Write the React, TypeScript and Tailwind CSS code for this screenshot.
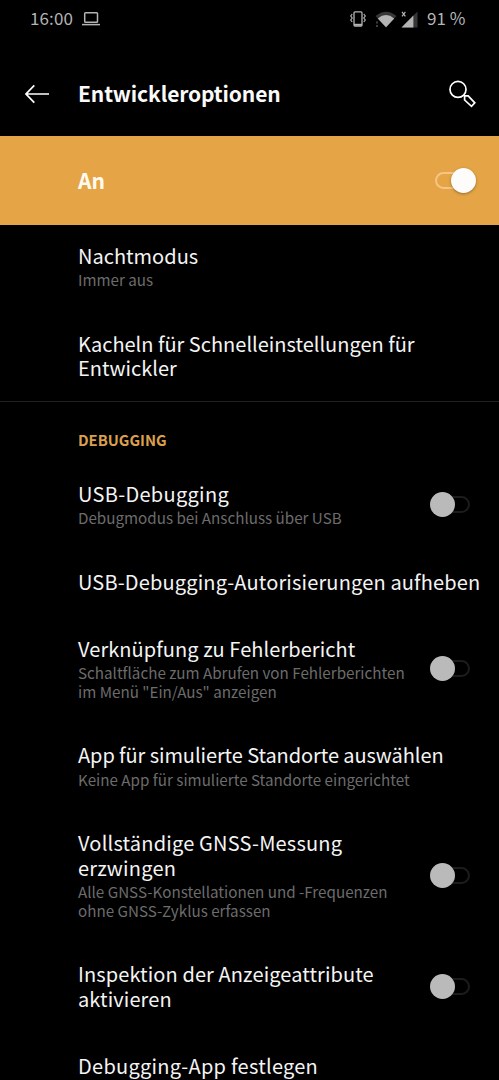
import { useState } from 'react';
import clsx from 'clsx';

type Option = {
  title: string;
  summary?: string;
  toggle?: boolean;
  tracking?: string;
};

const generalOptions: Option[] = [
  { title: 'Nachtmodus', summary: 'Immer aus' },
  { title: 'Kacheln für Schnelleinstellungen für Entwickler' },
];

const debuggingOptions: Option[] = [
  {
    title: 'USB-Debugging',
    summary: 'Debugmodus bei Anschluss über USB',
    toggle: true,
    tracking: 'tracking-[0.3px]',
  },
  { title: 'USB-Debugging-Autorisierungen aufheben', tracking: 'tracking-[0.16px]' },
  {
    title: 'Verknüpfung zu Fehlerbericht',
    summary: 'Schaltfläche zum Abrufen von Fehlerberichten im Menü "Ein/Aus" anzeigen',
    toggle: true,
    tracking: 'tracking-[0.07px]',
  },
  {
    title: 'App für simulierte Standorte auswählen',
    summary: 'Keine App für simulierte Standorte eingerichtet',
    tracking: 'tracking-[-0.08px]',
  },
  {
    title: 'Vollständige GNSS-Messung erzwingen',
    summary: 'Alle GNSS-Konstellationen und -Frequenzen ohne GNSS-Zyklus erfassen',
    toggle: true,
    tracking: 'tracking-[0.2px]',
  },
  {
    title: 'Inspektion der Anzeigeattribute aktivieren',
    toggle: true,
    tracking: 'tracking-[0.1px]',
  },
  { title: 'Debugging-App festlegen', tracking: 'tracking-[0.27px]' },
];

function Switch({ initial = false }: { initial?: boolean }) {
  const [on, setOn] = useState(initial);

  return (
    <button
      role="switch"
      aria-checked={on}
      onClick={() => setOn(!on)}
      className={clsx('flex h-6 w-10 shrink-0 items-center', on && 'flex-row-reverse')}
    >
      <span
        className={clsx(
          'z-10 size-[25px] shrink-0 rounded-full',
          on ? 'bg-[#fdfcfb] shadow-[0_1px_3px_rgba(0,0,0,0.35)]' : 'bg-[#bababa]'
        )}
      />
      <span
        className={clsx(
          'h-[17px] w-8 shrink-0 rounded-full border-2',
          on ? '-mr-4 border-[#f5c583]' : '-ml-[17px] border-[#1c1c1c]'
        )}
      />
    </button>
  );
}

function OptionRow({ title, summary, toggle, tracking }: Option) {
  return (
    <div className="flex items-center pt-[18.5px] pb-6 pl-[78px]">
      <div className={clsx('shrink-0', toggle ? 'w-[352px] pr-4' : 'w-[410px]')}>
        <p className={clsx('text-[20px] leading-[24.5px] text-[#f4f4f4]', tracking)}>{title}</p>
        {summary && (
          <p className="mt-[2px] mb-[0.5px] text-[15.2px] leading-[18.5px] text-[#6c6c6c]">{summary}</p>
        )}
      </div>
      {toggle && <Switch />}
    </div>
  );
}

function StatusBar() {
  return (
    <div className="flex h-[38px] items-center pl-[30px] text-[17px] text-[#b4b4b4]">
      <span className="w-[52px] pb-0.5 tracking-[0.1px]">16:00</span>
      {/* laptop */}
      <svg width="18" height="14" viewBox="0 0 18 14" fill="none" stroke="currentColor" strokeWidth="1.5">
        <rect x="2.7" y="0.8" width="12.8" height="9.4" rx="0.8" />
        <path d="M0 12.6h18" />
      </svg>
      {/* vibrate */}
      <svg className="ml-[250px]" width="16" height="16" viewBox="0 0 16 16" fill="none" stroke="currentColor" strokeWidth="1.3">
        <rect x="4" y="0.9" width="8" height="14.2" rx="1" />
        <path d="M4 13.8h8" strokeWidth="2" />
        <path d="M2.2 3L0.7 5L2.2 7L0.7 9L2.2 11" strokeWidth="1.2" />
        <path d="M13.8 3l1.5 2L13.8 7l1.5 2L13.8 11" strokeWidth="1.2" />
      </svg>
      {/* wifi */}
      <svg className="ml-[9px]" width="22" height="17" viewBox="0 0 22 17" fill="currentColor">
        <path d="M0.5 5Q11-3.5 21.5 5L11 16.5z" opacity="0.3" />
        <path d="M2.8 7.4Q11 0.8 19.2 7.4L11 16.2z" />
        <path d="M1 10.5h2v2H1zM1 14h2v2H1z" opacity="0.35" />
      </svg>
      {/* mobile signal without data */}
      <svg className="ml-[4px]" width="17" height="17" viewBox="0 0 17 17">
        <path d="M16.5 0.5V16.5H0.5z" fill="currentColor" opacity="0.3" />
        <path d="M12.4 4.6V16.5H0.5z" fill="currentColor" />
        <path d="M1 0.8l3.4 4.6M4.4 0.8L1 5.4" stroke="currentColor" strokeWidth="1.2" />
      </svg>
      <span className="ml-[9px] pb-0.5 whitespace-nowrap">91 %</span>
    </div>
  );
}

export default function App() {
  return (
    <div className="h-[1080px] w-[499px] overflow-hidden bg-black font-['Noto_Sans_CJK_SC','Noto_Sans',sans-serif]">
      <StatusBar />

      <header className="flex h-[98px] items-center pt-[14px] pl-[25px]">
        <svg width="24" height="20" viewBox="0 0 24 20" fill="none" stroke="#fff" strokeWidth="1.7">
          <path d="M24 10H1M9.3 1.3L1 10l8.3 8.7" />
        </svg>
        <h1 className="ml-[29px] w-[371px] text-[21px] font-bold tracking-[-0.12px] text-[#fafafa]">
          Entwickleroptionen
        </h1>
        <svg width="28" height="28" viewBox="0 0 28 28" fill="none" stroke="#fff" strokeWidth="1.7">
          <circle cx="9" cy="9.4" r="8" />
          <path d="M14.7 15.1l1 1M15.6 15.8h3.6l6.6 7-3.3 3.6-6.9-6.4z" />
        </svg>
      </header>

      <div className="flex h-[89px] items-center bg-[#e5a546] pl-[78px]">
        <span className="w-[358px] text-[21px] font-bold text-[#fffaf0]">An</span>
        <Switch initial />
      </div>

      <div className="h-[177px] border-b border-[#1f1f1f]">
        {generalOptions.map(option => (
          <OptionRow key={option.title} {...option} />
        ))}
      </div>

      <h2 className="pt-[26px] pb-[11px] pl-[78px] text-[14.8px] leading-[24px] font-bold text-[#dba04c]">
        DEBUGGING
      </h2>
      {debuggingOptions.map(option => (
        <OptionRow key={option.title} {...option} />
      ))}
    </div>
  );
}
